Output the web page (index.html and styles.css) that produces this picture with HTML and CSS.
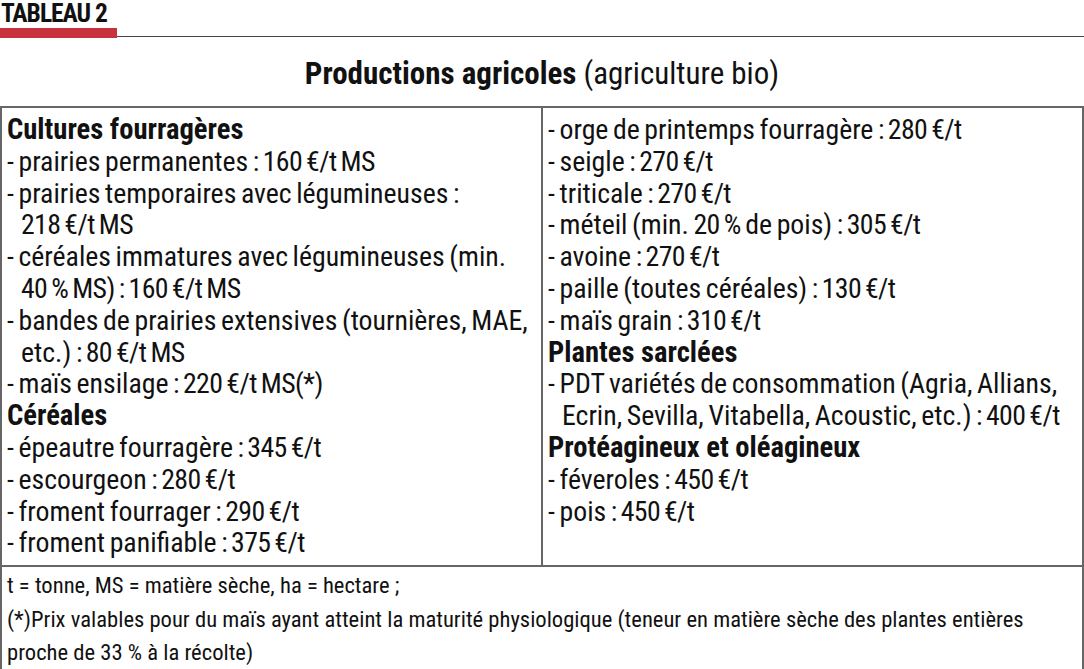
FILE: index.html
```html
<!DOCTYPE html>
<html lang="fr">
<head>
<meta charset="utf-8">
<title>Tableau 2</title>
<link rel="stylesheet" href="styles.css">
</head>
<body>
<header class="label">
  <div class="label-text">TABLEAU 2</div>
  <div class="rule"><span class="rule-red"></span><span class="rule-gray"></span></div>
</header>
<h1 class="title"><b>Productions agricoles</b> (agriculture bio)</h1>
<div class="table">
  <div class="cell left">
    <div class="head">Cultures fourragères</div>
    <div class="item">- prairies permanentes <span class="p">: 160 €/t MS</span></div>
    <div class="item">- prairies temporaires avec légumineuses :<br><span class="p">218 €/t MS</span></div>
    <div class="item">- céréales immatures avec légumineuses (min.<br><span class="p">40 % MS) : 160 €/t MS</span></div>
    <div class="item">- bandes de prairies extensives (tournières, MAE,<br>etc.) <span class="p">: 80 €/t MS</span></div>
    <div class="item">- maïs ensilage <span class="p">: 220 €/t MS(*)</span></div>
    <div class="head">Céréales</div>
    <div class="item">- épeautre fourragère <span class="p">: 345 €/t</span></div>
    <div class="item">- escourgeon <span class="p">: 280 €/t</span></div>
    <div class="item">- froment fourrager <span class="p">: 290 €/t</span></div>
    <div class="item">- froment panifiable <span class="p">: 375 €/t</span></div>
  </div>
  <div class="cell right">
    <div class="item">- orge de printemps fourragère <span class="p">: 280 €/t</span></div>
    <div class="item">- seigle <span class="p">: 270 €/t</span></div>
    <div class="item">- triticale <span class="p">: 270 €/t</span></div>
    <div class="item">- méteil (min. <span class="p">20 %</span> de pois) <span class="p">: 305 €/t</span></div>
    <div class="item">- avoine <span class="p">: 270 €/t</span></div>
    <div class="item">- paille (toutes céréales) <span class="p">: 130 €/t</span></div>
    <div class="item">- maïs grain <span class="p">: 310 €/t</span></div>
    <div class="head">Plantes sarclées</div>
    <div class="item">- PDT variétés de consommation (Agria, Allians,<br>Ecrin, Sevilla, Vitabella, Acoustic, etc.) <span class="p">: 400 €/t</span></div>
    <div class="head">Protéagineux et oléagineux</div>
    <div class="item">- féveroles <span class="p">: 450 €/t</span></div>
    <div class="item">- pois <span class="p">: 450 €/t</span></div>
  </div>
  <div class="cell foot">
    <div>t = tonne, MS = matière sèche, ha = hectare ;</div>
    <div>(*)Prix valables pour du maïs ayant atteint la maturité physiologique (teneur en matière sèche des plantes entières</div>
    <div>proche de 33 % à la récolte)</div>
  </div>
</div>
</body>
</html>
```
FILE: styles.css
```css
html, body {
  margin: 0;
  padding: 0;
  background: #ffffff;
}
body {
  width: 1084px;
  height: 669px;
  overflow: hidden;
  color: #111111;
  font-family: "Roboto Condensed", "Liberation Sans Narrow", "DejaVu Sans Condensed", Roboto, sans-serif;
  font-stretch: condensed;
}
.label {
  display: flex;
  flex-direction: column;
}
.label-text {
  font-weight: 700;
  font-size: 25.5px;
  letter-spacing: -1px;
  line-height: 26px;
  padding-left: 1px;
  height: 28px;
}
.rule {
  display: flex;
  align-items: flex-end;
  height: 10px;
}
.rule-red {
  width: 117px;
  height: 10px;
  background: #c8323c;
}
.rule-gray {
  flex: 1;
  height: 1px;
  margin-bottom: 1px;
  background: #444444;
}
.title {
  margin: 0;
  padding-top: 16px;
  height: 52px;
  text-align: center;
  font-size: 31px;
  line-height: 40px;
  font-weight: 400;
}
.title b {
  font-weight: 700;
}
.table {
  display: grid;
  grid-template-columns: 541px 1fr;
  border: 2px solid #666666;
  border-bottom: none;
}
.cell {
  font-size: 27.8px;
  word-spacing: -1.8px;
  line-height: 31.8px;
}
.p {
  letter-spacing: -0.6px;
}
.left {
  padding: 6px 4px 6px 5px;
  border-right: 2px solid #666666;
}
.right {
  padding: 6px 4px 6px 5px;
}
.head {
  font-weight: 700;
  font-size: 28.6px;
  word-spacing: 0;
}
.item {
  padding-left: 14px;
  text-indent: -14px;
}
.foot {
  grid-column: 1 / 3;
  border-top: 2px solid #666666;
  padding: 2px 5px;
  font-size: 22.6px;
  word-spacing: 0;
  line-height: 33.5px;
}
```
